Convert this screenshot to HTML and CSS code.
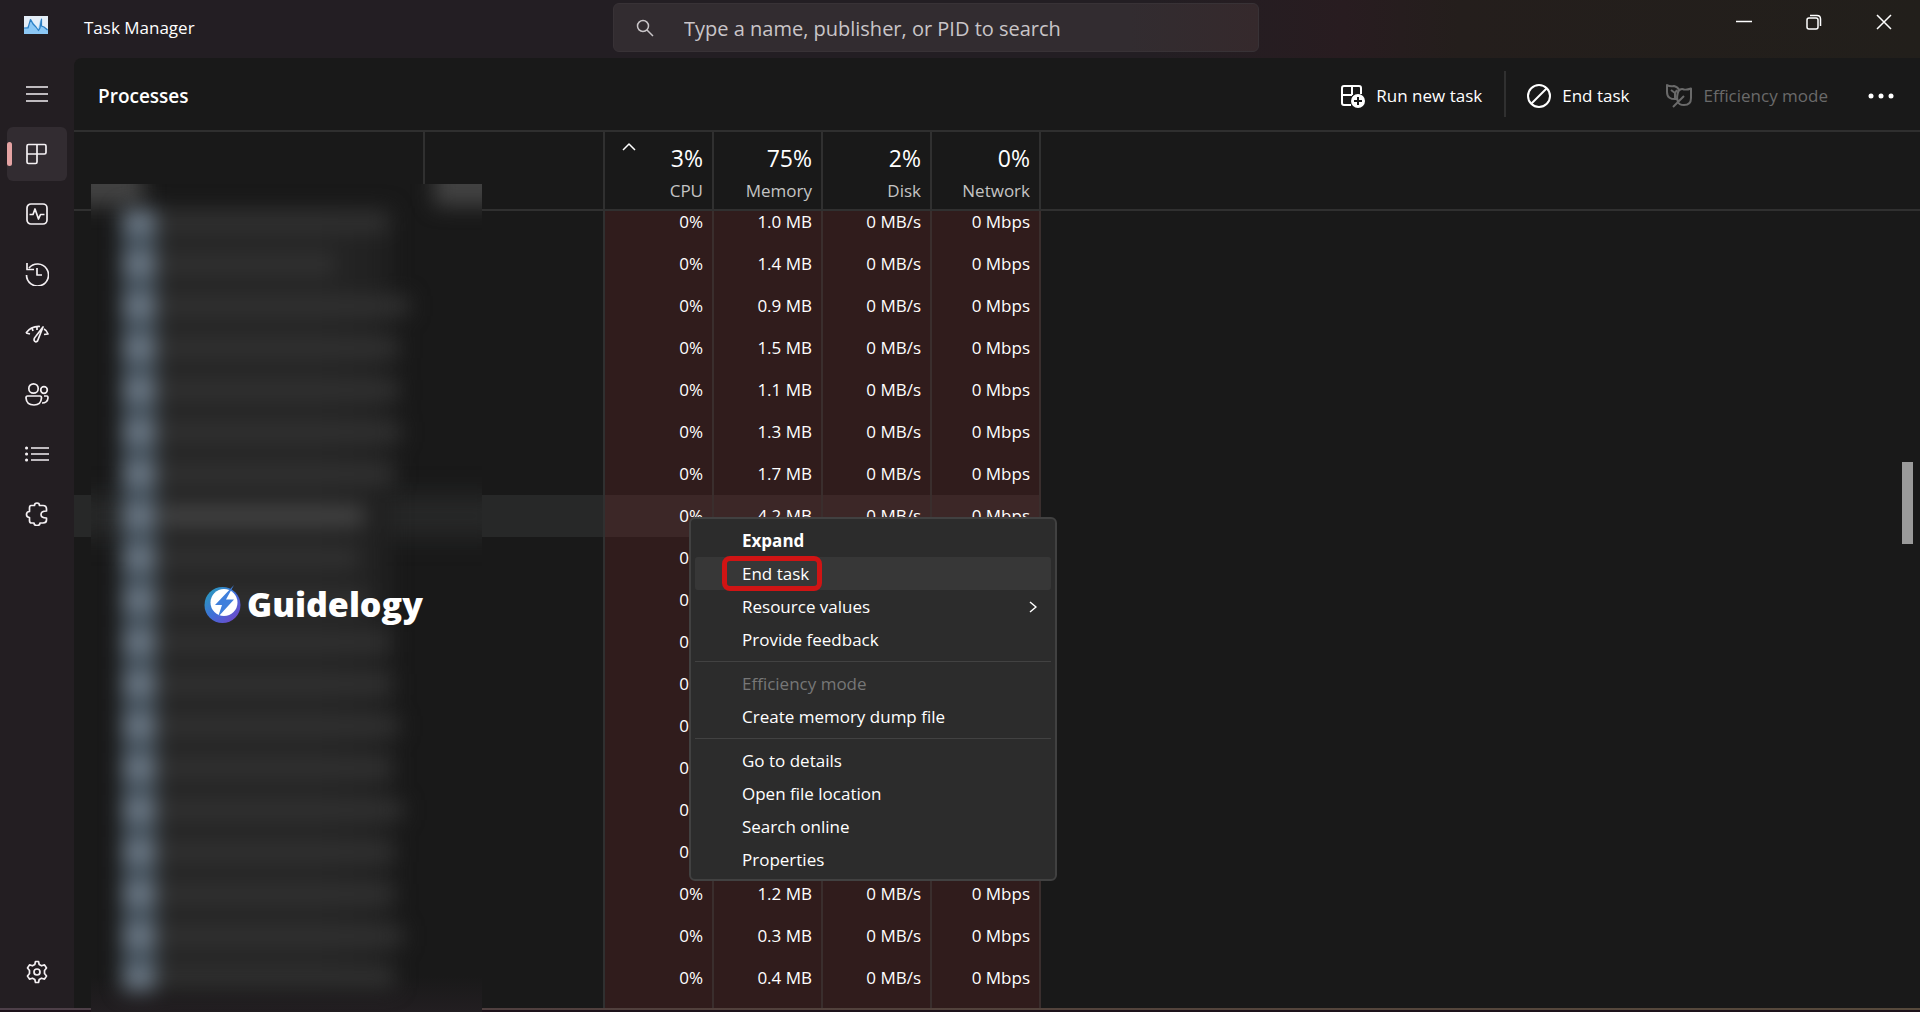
FILE: index.html
```html
<!DOCTYPE html>
<html lang="en">
<head>
<meta charset="utf-8">
<title>Task Manager</title>
<link rel="stylesheet" href="styles.css">
</head>
<body>
<div class="app">
  <header class="titlebar">
    <div class="brand">
      <svg class="brand-icon" width="24" height="18" viewBox="0 0 24 18" aria-hidden="true">
        <rect width="24" height="18" fill="#e4eef8"/>
        <path d="M0 12L5 10L7 3L11 9L14 14L16 5L18 3V10L24 13V18H0Z" fill="#8cc8f5"/>
        <path d="M0 12H4L6.500 3.500L9 8L12 11L14.500 14.500L16 12L17.500 3V10L20 11L23.500 14" fill="none" stroke="#2b7fc4" stroke-width="1.200"/>
      </svg>
      <span class="app-name">Task Manager</span>
    </div>
    <label class="search">
      <svg width="18" height="18" viewBox="0 0 18 18" aria-hidden="true"><circle cx="7" cy="7" r="5.500"/><path d="M11 11L17 17"/></svg>
      <input type="text" aria-label="Search" placeholder="Type a name, publisher, or PID to search">
    </label>
    <div class="window-buttons">
      <button aria-label="Minimize"><svg width="16" height="16" viewBox="0 0 16 16"><path d="M0 7.500H16"/></svg></button>
      <button aria-label="Restore"><svg width="16" height="16" viewBox="0 0 16 16"><rect x="1" y="4" width="11" height="11" rx="2"/><path d="M4 1.500H11Q14.500 1.500 14.500 5V12"/></svg></button>
      <button aria-label="Close"><svg width="16" height="16" viewBox="0 0 16 16"><path d="M1 1L15 15M15 1L1 15"/></svg></button>
    </div>
  </header>

  <div class="body">
    <nav class="sidebar">
      <button aria-label="Open navigation"><svg width="24" height="24" viewBox="0 0 24 24"><path d="M1 5H23M1 12H23M1 19H23"/></svg></button>
      <button class="selected" aria-label="Processes"><svg width="24" height="24" viewBox="0 0 24 24"><path d="M3.500 2.500H19.500Q21 2.500 21 4V10.500Q21 12 19.500 12H12V20Q12 21.500 10.500 21.500H3.500Q2 21.500 2 20V4Q2 2.500 3.500 2.500ZM12 2.500V12H2"/></svg></button>
      <button aria-label="Performance"><svg width="24" height="24" viewBox="0 0 24 24"><rect x="2" y="2" width="20" height="20" rx="4"/><path d="M4.500 12.500H8L10 7L13.500 17L15.500 12.500H19.500"/></svg></button>
      <button aria-label="App history"><svg width="24" height="24" viewBox="0 0 24 24"><path d="M1.500 13A11 11 0 1 0 4 6M2 1V7.500H9M12 6V13H17"/></svg></button>
      <button aria-label="Startup apps"><svg width="24" height="24" viewBox="0 0 24 24"><path d="M1 11Q6 4 15 4.500M1 11L5 12M7 6L8 9M12 4.500V8M19 7Q22 8.500 23 12L19 12.500M18 5L12.500 19Q10 21 9 18Q9 16 11 14Z"/></svg></button>
      <button aria-label="Users"><svg width="24" height="24" viewBox="0 0 24 24"><circle cx="8.500" cy="6.500" r="4.700"/><circle cx="19" cy="8" r="3.300"/><path d="M2.500 14H15Q16.500 14 16.500 16Q16 23 9 23Q1.500 23 1 16Q1 14 2.500 14ZM19 14H22Q23 14 23 16Q22.500 21 17 21"/></svg></button>
      <button aria-label="Details"><svg width="24" height="24" viewBox="0 0 24 24"><path d="M6 6H24M6 12H24M6 18H24"/><path class="dots" d="M1.500 6H1.600M1.500 12H1.600M1.500 18H1.600"/></svg></button>
      <button aria-label="Services"><svg width="24" height="24" viewBox="0 0 24 24"><path d="M6 3.500H9.500Q9.500 1 12 1T14.500 3.500H18Q21.500 3.500 21.500 7V9Q16 9 16 12.500T21.500 16V18Q21.500 21 18 21H15Q15 23.500 12 23.500T9 21H6.500Q4.500 21 4.500 18.500V15.500Q1.500 15.500 1.500 12.500T4.500 9.500V6Q4.500 3.500 6 3.500Z"/></svg></button>
      <button class="settings" aria-label="Settings"><svg width="24" height="24" viewBox="0 0 24 24"><path d="M9.800 4.500L10.500 1.500H13.500L14.200 4.500L16.500 5.800L19.500 4.900L21.500 8L19.500 10.500V13.500L21.500 16L19.500 19.100L16.500 18.200L14.200 19.500L13.500 22.500H10.500L9.800 19.500L7.500 18.200L4.500 19.100L2.500 16L4.500 13.500V10.500L2.500 8L4.500 4.900L7.500 5.800Z"/><circle cx="12" cy="12" r="3"/></svg></button>
    </nav>

    <main class="panel">
      <div class="panel-head">
        <h1>Processes</h1>
        <div class="toolbar">
          <button class="run"><svg width="24" height="24" viewBox="0 0 24 24"><path d="M10 21H3Q1 21 1 19V4Q1 2 3 2H18Q20 2 20 4V10M1 11H11M11 2V11"/><circle class="solid" cx="17" cy="17" r="7"/><path class="dark" d="M17 13V21M13 17H21"/></svg>Run new task</button>
          <button class="end"><svg width="24" height="24" viewBox="0 0 24 24"><circle cx="12" cy="12" r="11"/><path d="M19.500 4.500L4.500 19.500"/></svg>End task</button>
          <button class="efficiency" disabled><svg width="26" height="24" viewBox="0 0 26 24"><path d="M11 15Q1 16 1 8V1Q4 3 8 2Q12 3 13 6M5 6L9 9V14M9 9L11 6M12 18Q10 13 12.500 7Q15 4 18 5.500Q21 6 25 4.500V14Q25 21 18 21Q13 21 12 18ZM7 23L18 12"/></svg>Efficiency mode</button>
          <button class="more" aria-label="See more"><svg width="26" height="6" viewBox="0 0 26 6"><circle class="solid" cx="3" cy="3" r="2.500"/><circle class="solid" cx="13" cy="3" r="2.500"/><circle class="solid" cx="23" cy="3" r="2.500"/></svg></button>
        </div>
      </div>

      <div class="list">
        <table>
          <colgroup><col class="c-name"><col class="c-status"><col class="c-num"><col class="c-num"><col class="c-num"><col class="c-num"><col></colgroup>
          <thead>
            <tr>
              <th></th><th></th>
              <th><svg class="sort" width="14" height="8" viewBox="0 0 14 8"><path d="M1 7L7 1L13 7"/></svg><b>3%</b><span>CPU</span></th>
              <th><b>75%</b><span>Memory</span></th>
              <th><b>2%</b><span>Disk</span></th>
              <th><b>0%</b><span>Network</span></th>
              <th></th>
            </tr>
          </thead>
          <tbody>
            <tr class="first"><td></td><td></td><td>0%</td><td>1.0 MB</td><td>0 MB/s</td><td>0 Mbps</td><td></td></tr>
            <tr><td></td><td></td><td>0%</td><td>1.4 MB</td><td>0 MB/s</td><td>0 Mbps</td><td></td></tr>
            <tr><td></td><td></td><td>0%</td><td>0.9 MB</td><td>0 MB/s</td><td>0 Mbps</td><td></td></tr>
            <tr><td></td><td></td><td>0%</td><td>1.5 MB</td><td>0 MB/s</td><td>0 Mbps</td><td></td></tr>
            <tr><td></td><td></td><td>0%</td><td>1.1 MB</td><td>0 MB/s</td><td>0 Mbps</td><td></td></tr>
            <tr><td></td><td></td><td>0%</td><td>1.3 MB</td><td>0 MB/s</td><td>0 Mbps</td><td></td></tr>
            <tr><td></td><td></td><td>0%</td><td>1.7 MB</td><td>0 MB/s</td><td>0 Mbps</td><td></td></tr>
            <tr class="current"><td></td><td></td><td>0%</td><td>4.2 MB</td><td>0 MB/s</td><td>0 Mbps</td><td></td></tr>
            <tr><td></td><td></td><td>0%</td><td></td><td></td><td></td><td></td></tr>
            <tr><td></td><td></td><td>0%</td><td></td><td></td><td></td><td></td></tr>
            <tr><td></td><td></td><td>0%</td><td></td><td></td><td></td><td></td></tr>
            <tr><td></td><td></td><td>0%</td><td></td><td></td><td></td><td></td></tr>
            <tr><td></td><td></td><td>0%</td><td></td><td></td><td></td><td></td></tr>
            <tr><td></td><td></td><td>0%</td><td></td><td></td><td></td><td></td></tr>
            <tr><td></td><td></td><td>0%</td><td></td><td></td><td></td><td></td></tr>
            <tr><td></td><td></td><td>0%</td><td></td><td></td><td></td><td></td></tr>
            <tr><td></td><td></td><td>0%</td><td>1.2 MB</td><td>0 MB/s</td><td>0 Mbps</td><td></td></tr>
            <tr><td></td><td></td><td>0%</td><td>0.3 MB</td><td>0 MB/s</td><td>0 Mbps</td><td></td></tr>
            <tr><td></td><td></td><td>0%</td><td>0.4 MB</td><td>0 MB/s</td><td>0 Mbps</td><td></td></tr>
            <tr><td></td><td></td><td></td><td></td><td></td><td></td><td></td></tr>
          </tbody>
        </table>
        <div class="scroll-thumb"></div>
      </div>
    </main>
  </div>
  <div class="window-edge"></div>

  <!-- Frosted cover over the process names -->
  <div class="frost">
    <div class="frost-corner left"></div>
    <div class="frost-corner right"></div>
    <div class="frost-current"></div>
    <div class="frost-rows">
      <i style="width:228px"></i><i style="width:173px"></i><i style="width:248px"></i><i style="width:238px"></i><i style="width:238px"></i><i style="width:240px"></i><i style="width:234px"></i><i class="lit" style="width:203px"></i><i style="width:198px"></i><i style="width:208px"></i><i style="width:230px"></i><i style="width:232px"></i><i style="width:238px"></i><i style="width:232px"></i><i style="width:242px"></i><i style="width:234px"></i><i style="width:234px"></i><i style="width:242px"></i><i style="width:234px"></i>
    </div>
  </div>

  <div class="watermark">
    <svg width="38" height="40" viewBox="0 0 38 40" aria-hidden="true">
      <defs><linearGradient id="ring" x1="0" y1="0" x2="1" y2="1"><stop offset="0" stop-color="#25a3b8"/><stop offset=".5" stop-color="#3f6fd8"/><stop offset="1" stop-color="#7a3fc8"/></linearGradient></defs>
      <circle cx="18.500" cy="21" r="18" fill="url(#ring)"/>
      <circle cx="20" cy="18.500" r="13.500" fill="#fff"/>
      <path d="M30 1L11 21H18L14 33L30 15.500H22Z" fill="#3f7fdc"/>
    </svg>
    <span>Guidelogy</span>
  </div>

  <div class="menu" role="menu">
    <button role="menuitem" class="default">Expand</button>
    <button role="menuitem" class="hover"><span class="marked">End task</span></button>
    <button role="menuitem">Resource values<svg width="8" height="12" viewBox="0 0 8 12"><path d="M1 1L7 6L1 11"/></svg></button>
    <button role="menuitem">Provide feedback</button>
    <hr>
    <button role="menuitem" disabled>Efficiency mode</button>
    <button role="menuitem">Create memory dump file</button>
    <hr>
    <button role="menuitem">Go to details</button>
    <button role="menuitem">Open file location</button>
    <button role="menuitem">Search online</button>
    <button role="menuitem">Properties</button>
  </div>
</div>
</body>
</html>
```
FILE: styles.css
```css
* { box-sizing: border-box; }
body {
  margin: 0;
  background: #191919;
  color: #fff;
  font: 17px/22px "Open Sans", "Noto Sans", sans-serif;
}
button { border: 0; padding: 0; background: none; color: inherit; font: inherit; }
svg { flex: none; fill: none; stroke: currentColor; stroke-width: 2; stroke-linejoin: round; }
.app {
  position: relative;
  display: flex;
  flex-direction: column;
  height: 100vh;
  overflow: hidden;
}

/* Title bar */
.titlebar {
  display: grid;
  grid-template-columns: minmax(0, 589fr) 646px minmax(0, 661fr);
  height: 58px;
  padding-left: 24px;
  background: linear-gradient(90deg, #231e23 0%, #231e23 60%, #281c20 70%, #241e1c 76%, #221f1b 100%);
}
.brand { display: flex; align-items: center; gap: 36px; height: 56px; }
.brand-icon { stroke: none; margin-bottom: 6px; }
.search {
  display: flex;
  align-items: center;
  gap: 30px;
  height: 49px;
  margin-top: 3px;
  padding: 0 24px 0 22px;
  border: 1px solid #383236;
  border-radius: 6px;
  background: linear-gradient(90deg, #322c30 80%, #35292c);
  color: #c9c5c8;
}
.search svg { stroke-width: 1.5; }
.search input {
  flex: 1;
  border: 0;
  padding: 2px 0 0;
  background: none;
  color: inherit;
  font: 20px/28px "Open Sans", "Noto Sans", sans-serif;
}
.search input::placeholder { color: #c9c5c8; opacity: 1; }
.window-buttons { display: flex; justify-content: flex-end; height: 43px; padding-right: 1px; }
.window-buttons button { display: flex; align-items: center; justify-content: center; width: 70px; }
.window-buttons svg { stroke-width: 1.5; }

/* Side rail */
.body { display: flex; flex: 1; min-height: 0; background: #231e22; }
.sidebar {
  display: flex;
  flex-direction: column;
  gap: 6px;
  width: 74px;
  padding: 9px 7px;
}
.sidebar button {
  display: flex;
  align-items: center;
  justify-content: center;
  position: relative;
  height: 54px;
  border-radius: 6px;
  color: #f4f0f3;
}
.sidebar svg { stroke-width: 1.7; }
.sidebar .dots { stroke-width: 3; stroke-linecap: round; }
.sidebar .selected { background: #322c31; }
.sidebar .selected::before {
  content: "";
  position: absolute;
  left: 0;
  width: 5px;
  height: 24px;
  border-radius: 3px;
  background: #e5a3a3;
}
.sidebar .settings { margin-top: auto; }

/* Panel */
.panel {
  display: flex;
  flex-direction: column;
  flex: 1;
  min-width: 0;
  border-top-left-radius: 8px;
  background: #191919;
}
.panel-head {
  display: flex;
  align-items: center;
  justify-content: space-between;
  height: 74px;
  padding: 0 26px 0 24px;
  border-bottom: 2px solid #2f2f2f;
}
h1 { margin: 0; padding-top: 3px; font-size: 19px; font-weight: 600; line-height: 26px; }
.toolbar { display: flex; align-items: center; }
.toolbar button { display: flex; align-items: center; gap: 11px; height: 46px; padding-top: 3px; }
.toolbar .run { padding-right: 22px; border-right: 2px solid #303030; }
.toolbar .end { padding: 3px 37px 0 21px; }
.toolbar .efficiency { padding-right: 40px; color: #6a6a6a; }
.solid { fill: currentColor; stroke: none; }
.dark { stroke: #191919; }

/* Process table */
.list { position: relative; flex: 1; min-height: 0; overflow: hidden; }
table { width: 100%; table-layout: fixed; border-collapse: separate; border-spacing: 0; }
.c-name { width: 351px; }
.c-status { width: 180px; }
.c-num { width: 109px; }
th {
  position: relative;
  height: 79px;
  padding: 10px 9px 0 0;
  border-right: 2px solid #303030;
  border-bottom: 2px solid #303030;
  text-align: right;
  vertical-align: top;
  font-weight: 400;
}
th b { display: block; font-size: 23px; font-weight: 400; line-height: 32px; }
th span { display: block; margin-top: 6px; color: #c4c4c4; }
th:last-child, td:last-child { border-right: 0; }
.sort { position: absolute; left: 17px; top: 11px; stroke-width: 1.5; }
td { height: 42px; padding: 0 9px 0 0; text-align: right; }
td:nth-child(2) { border-right: 2px solid #303030; }
td:nth-child(n+3):nth-child(-n+6) { border-right: 2px solid #3a2e2d; background: #301c1c; }
.first td { height: 32px; padding-bottom: 10px; }
.current td { background: #272828; }
.current td:last-child { background: none; }
.current td:nth-child(n+3):nth-child(-n+6) { background: #3c2727; }
.scroll-thumb {
  position: absolute;
  right: 7px;
  top: 330px;
  width: 11px;
  height: 82px;
  background: #9a9a9a;
}
.window-edge {
  height: 4px;
  border-bottom: 2px solid #1d121a;
  background: linear-gradient(90deg, #4d3f49, #51403c 35%, #574a3c);
}

/* Frosted cover */
.frost {
  position: absolute;
  left: 91px;
  top: 184px;
  bottom: 0;
  width: 391px;
  overflow: hidden;
  background: linear-gradient(0deg, #221e21, #191919 36px);
}
.frost-corner { position: absolute; top: -20px; height: 42px; background: #424242; filter: blur(10px); }
.frost-corner.left { left: -20px; width: 72px; }
.frost-corner.right { right: -20px; width: 68px; }
.frost-current {
  position: absolute;
  inset: 311px -20px auto;
  height: 42px;
  background: #272828;
  filter: blur(12px);
}
.frost-rows {
  display: flex;
  flex-direction: column;
  padding: 17px 0 0 30px;
  filter: blur(10px);
}
.frost-rows::before {
  content: "";
  position: absolute;
  left: 50px;
  top: 24px;
  bottom: 12px;
  width: 250px;
  background: linear-gradient(90deg, #252525 70%, #202020);
}
.frost-rows::after {
  content: "";
  position: absolute;
  left: 30px;
  top: 28px;
  bottom: 18px;
  width: 36px;
  background: #3e4b56;
}
.frost-rows i {
  position: relative;
  z-index: 1;
  flex: none;
  height: 42px;
  margin-left: 40px;
  border-block: 11px solid transparent;
  background: #313131 padding-box;
}
.frost-rows i::before {
  content: "";
  position: absolute;
  left: -38px;
  top: -3px;
  width: 32px;
  height: 26px;
  background: #6a7784;
}
.frost-rows .lit { background-color: #444; }

/* Logo */
.watermark {
  position: absolute;
  left: 204px;
  top: 584px;
  display: flex;
  align-items: center;
  gap: 5px;
  font: 800 34px/40px "Open Sans", sans-serif;
}
.watermark svg { stroke: none; }

/* Context menu */
.menu {
  position: absolute;
  left: 689px;
  top: 517px;
  display: flex;
  flex-direction: column;
  width: 368px;
  padding: 5px 4px 3px;
  border: 2px solid #414141;
  border-radius: 6px;
  background: #2c2c2c;
}
.menu button {
  display: flex;
  align-items: center;
  justify-content: space-between;
  height: 33px;
  padding: 0 14px 0 47px;
  border-radius: 3px;
  text-align: left;
}
.menu .default { font-weight: 700; }
.menu .hover { background: #373737; }
.menu :disabled { color: #777; }
.menu svg { stroke-width: 1.5; }
.menu hr { width: 100%; height: 1px; margin: 5px 0; border: 0; background: #424242; }
.marked { position: relative; }
.marked::before {
  content: "";
  position: absolute;
  inset: -7px -13px -6px -20px;
  border: 5px solid #d01414;
  border-radius: 8px;
}
```
